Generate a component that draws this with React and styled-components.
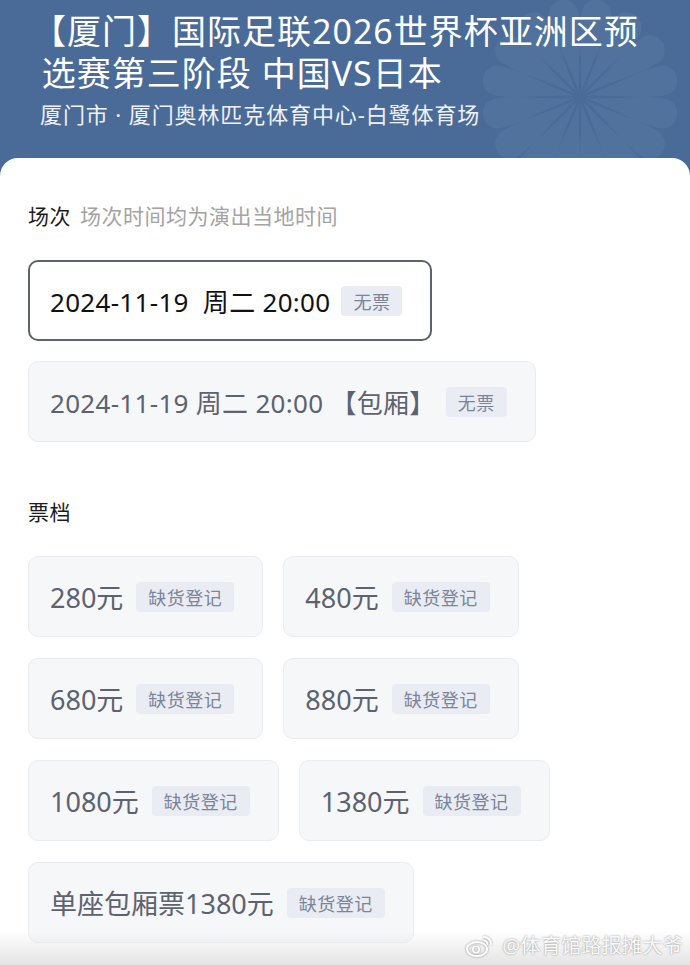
import React from 'react';
import styled, { createGlobalStyle } from 'styled-components';

const GlobalStyle = createGlobalStyle`
  html, body {
    margin: 0;
    padding: 0;
    background: #4a6b97;
  }
  body {
    font-family: "Noto Sans", "Noto Sans CJK SC", sans-serif;
  }
`;

const Page = styled.div`
  width: 690px;
  height: 965px;
  background: #4a6b97;
  position: relative;
  overflow: hidden;
`;

const Header = styled.header`
  position: relative;
  padding: 10px 20px 29px 32px;
  color: #fff;
`;

const Flower = styled.svg`
  position: absolute;
  left: 475px;
  top: -8px;
  width: 210px;
  height: 210px;
`;

const Title = styled.h1`
  position: relative;
  margin: 0;
  font-size: 34px;
  line-height: 42px;
  font-weight: 400;
  letter-spacing: 1px;
`;

const Venue = styled.p`
  position: relative;
  margin: 5px 0 0 8px;
  font-size: 22px;
  line-height: 30px;
  letter-spacing: 0.9px;
  color: #eef2f8;
`;

const Card = styled.main`
  position: relative;
  background: #fff;
  border-radius: 18px 18px 0 0;
  padding: 43px 28px 20px 28px;
  height: 807px;
  box-sizing: border-box;
`;

const Label = styled.h2`
  margin: 0 0 29px;
  font-size: 21px;
  line-height: 30px;
  font-weight: 400;
  color: #1c1c1c;
  letter-spacing: 0.5px;

  span {
    margin-left: 9px;
    color: #a3a3a3;
  }
`;

const Section = styled.section`
  margin-bottom: 55px;
`;

const Options = styled.div`
  display: flex;
  flex-wrap: wrap;
  gap: ${p => p.$column ? '20px' : '21px 20px'};
  flex-direction: ${p => p.$column ? 'column' : 'row'};
  align-items: flex-start;
`;

const Option = styled.div`
  display: flex;
  align-items: center;
  height: 81px;
  box-sizing: border-box;
  padding: 0 28px 0 ${p => p.$active ? '20px' : '21px'};
  border-radius: 10px;
  background: ${p => p.$active ? '#fff' : '#f6f7f9'};
  border: ${p => p.$active ? '2px solid #5d626c' : '1px solid #ebecef'};
  color: ${p => p.$active ? '#111' : '#5d6270'};
  font-size: ${p => p.$price ? '27px' : '26px'};
  letter-spacing: ${p => p.$price ? '0' : '0.3px'};
  white-space: pre;
`;

const Tag = styled.span`
  display: inline-flex;
  align-items: center;
  height: 30px;
  padding: 0 12px;
  margin-left: ${p => p.$gap || 12}px;
  border-radius: 4px;
  background: #e9edf3;
  color: #7b849a;
  font-size: 18px;
  letter-spacing: 0.5px;
`;

const BottomFade = styled.div`
  position: absolute;
  left: 0;
  right: 0;
  bottom: 0;
  height: 34px;
  background: linear-gradient(to bottom, rgba(240, 240, 240, 0), #e4e4e4);
  display: flex;
  justify-content: flex-end;
  align-items: flex-start;
  padding-right: 7px;
  box-sizing: border-box;
`;

const Watermark = styled.span`
  display: flex;
  align-items: center;
  gap: 8px;
  font-size: 20px;
  line-height: 30px;
  letter-spacing: 0.3px;
  color: rgba(255, 255, 255, 0.95);
  text-shadow: 0 0 2px rgba(0, 0, 0, 0.45);
`;

const petals = Array.from({ length: 16 }, (_, i) => i * 22.5 + 11.25);

const FlowerMark = () => (
  <Flower viewBox="-105 -105 210 210">
    {petals.map(a => (
      <path
        key={a}
        transform={`rotate(${a})`}
        d="M0 -5 C3 -30 15 -62 15 -84 A15 15 0 0 0 -15 -84 C-15 -62 -3 -30 0 -5 Z"
        fill="#5a7ea8"
        opacity="0.4"
      />
    ))}
  </Flower>
);

const WeiboIcon = () => (
  <svg width="28" height="24" viewBox="0 0 28 24" style={{ filter: 'drop-shadow(0 0 1px rgba(0,0,0,0.4))' }}>
    <ellipse cx="11" cy="15" rx="10" ry="7" fill="none" stroke="#fff" strokeWidth="2" />
    <circle cx="10" cy="15.5" r="3.2" fill="none" stroke="#fff" strokeWidth="1.6" />
    <path d="M18 3 a7 7 0 0 1 7 7" fill="none" stroke="#fff" strokeWidth="2" strokeLinecap="round" />
    <path d="M18 6.8 a3.3 3.3 0 0 1 3.3 3.3" fill="none" stroke="#fff" strokeWidth="1.6" strokeLinecap="round" />
  </svg>
);

const sessions = [
  { text: '2024-11-19  周二 20:00', active: true, gap: 11 },
  { text: '2024-11-19 周二 20:00 【包厢】', active: false, gap: 10 },
];

const tiers = ['280元', '480元', '680元', '880元', '1080元', '1380元', '单座包厢票1380元'];

export default function App() {
  return (
    <>
      <GlobalStyle />
      <Page>
        <Header>
          <FlowerMark />
          <Title>【厦门】国际足联2026世界杯亚洲区预<br />&nbsp;选赛第三阶段 中国VS日本</Title>
          <Venue>厦门市 · 厦门奥林匹克体育中心-白鹭体育场</Venue>
        </Header>
        <Card>
          <Section>
            <Label>场次<span>场次时间均为演出当地时间</span></Label>
            <Options $column>
              {sessions.map(s => (
                <Option key={s.text} $active={s.active}>
                  {s.text}
                  <Tag $gap={s.gap}>无票</Tag>
                </Option>
              ))}
            </Options>
          </Section>
          <section>
            <Label>票档</Label>
            <Options>
              {tiers.map(t => (
                <Option key={t} $price>
                  {t}
                  <Tag $gap={13}>缺货登记</Tag>
                </Option>
              ))}
            </Options>
          </section>
        </Card>
        <BottomFade>
          <Watermark><WeiboIcon />@体育馆路报摊大爷</Watermark>
        </BottomFade>
      </Page>
    </>
  );
}
